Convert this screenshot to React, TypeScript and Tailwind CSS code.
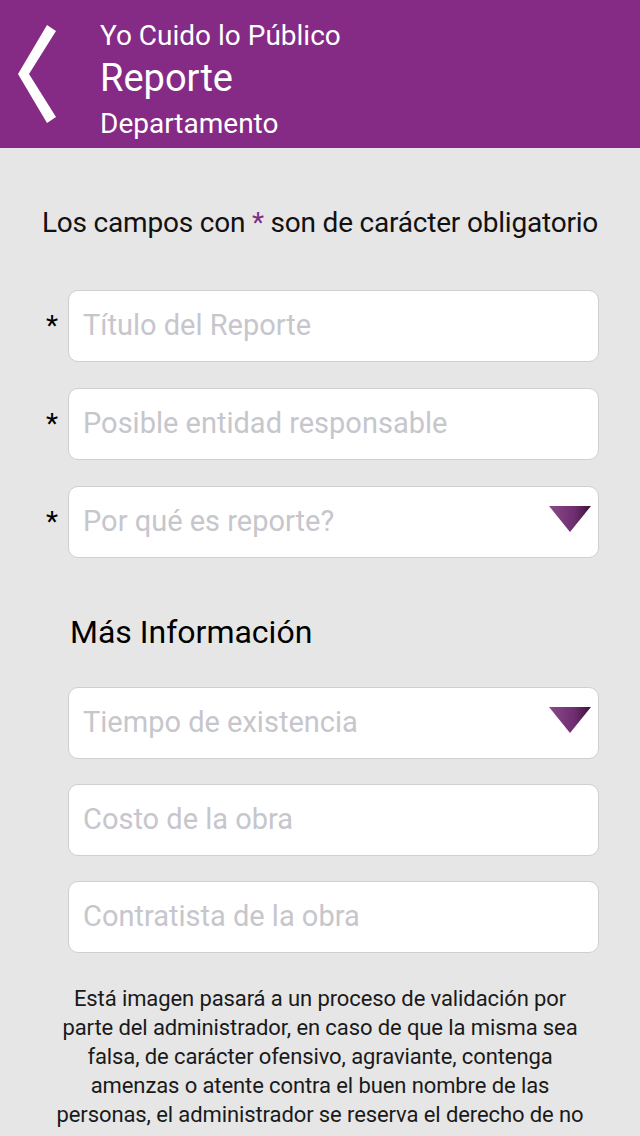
const font = { fontFamily: 'Roboto, "Noto Sans", sans-serif' };

// Only the lines visible above the fold
const noticeLines = [
  'Está imagen pasará a un proceso de validación por',
  'parte del administrador, en caso de que la misma sea',
  'falsa, de carácter ofensivo, agraviante, contenga',
  'amenzas o atente contra el buen nombre de las',
  'personas, el administrador se reserva el derecho de no',
];

function BackChevron() {
  return (
    <svg width="60" height="110" viewBox="0 0 60 110" className="block">
      <polygon points="47,0 56,6 29,49 56,92 47,98 18,49" fill="white" />
    </svg>
  );
}

function Caret() {
  return (
    <svg width="42" height="27" viewBox="0 0 42 27" className="shrink-0 mb-[5px]">
      <defs>
        <linearGradient id="caretFill" x1="0" y1="0" x2="1" y2="0">
          <stop offset="0" stopColor="#8a4a8a" />
          <stop offset="0.6" stopColor="#6f2e6f" />
          <stop offset="1" stopColor="#3a1238" />
        </linearGradient>
      </defs>
      <polygon points="0,0 42,0 21,26" fill="url(#caretFill)" />
    </svg>
  );
}

interface FieldProps {
  placeholder: string;
  required?: boolean;
  select?: boolean;
}

function Field({ placeholder, required, select }: FieldProps) {
  return (
    <div className="flex items-center">
      <div className="w-[68px] flex justify-end pr-[10px] text-[28px] leading-[28px] text-black">
        {required ? '*' : ''}
      </div>
      <div className="w-[531px] h-[72px] bg-white rounded-[10px] border border-[#cfcfcf] flex items-center pl-[14px] pr-[7px]">
        <span className="flex-1 text-[29px] text-[#c6c6cc]">{placeholder}</span>
        {select && <Caret />}
      </div>
    </div>
  );
}

export default function App() {
  return (
    <div className="w-[640px] h-[1136px] bg-[#e6e6e6] overflow-hidden" style={font}>
      {/* Header */}
      <div className="h-[148px] bg-[#852b86] flex items-start">
        <div className="w-[100px] pt-[25px]">
          <BackChevron />
        </div>
        <div className="text-white pt-[19px]">
          <div className="text-[28px] leading-[34px]">Yo Cuido lo Público</div>
          <div className="text-[38px] leading-[46px] mt-[2px]">Reporte</div>
          <div className="text-[28px] leading-[34px] mt-[6px]">Departamento</div>
        </div>
      </div>

      <div className="pt-[55px] text-center text-[28px] tracking-[-0.2px] text-[#111] leading-[40px]">
        Los campos con <span className="text-[#7b2f8a]">*</span> son de carácter obligatorio
      </div>

      <div className="mt-[47px] flex flex-col gap-[26px]">
        <Field placeholder="Título del Reporte" required />
        <Field placeholder="Posible entidad responsable" required />
        <Field placeholder="Por qué es reporte?" required select />
      </div>

      <div className="pl-[70px] mt-[54px] text-[32px] leading-[40px] text-black">Más Información</div>

      <div className="mt-[35px] flex flex-col gap-[25px]">
        <Field placeholder="Tiempo de existencia" select />
        <Field placeholder="Costo de la obra" />
        <Field placeholder="Contratista de la obra" />
      </div>

      {/* Validation notice */}
      <div className="mt-[31px] flex flex-col items-center text-[22px] tracking-[-0.1px] leading-[29px] text-[#1a1a1a] whitespace-nowrap">
        {noticeLines.map((line) => (
          <div key={line}>{line}</div>
        ))}
      </div>
    </div>
  );
}
